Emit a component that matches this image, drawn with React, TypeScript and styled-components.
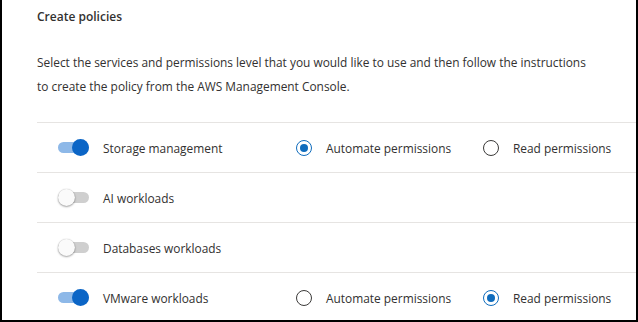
import styled, { createGlobalStyle } from 'styled-components';

const GlobalStyle = createGlobalStyle`
  html, body {
    margin: 0;
    padding: 0;
    background: #ffffff;
  }
  body {
    font-family: 'Open Sans', 'Noto Sans', sans-serif;
    color: #323130;
  }
`;

const Frame = styled.div`
  box-sizing: border-box;
  width: 638px;
  height: 322px;
  overflow: hidden;
  border: 2px solid #000;
  border-top: none;
  background: #fff;
  padding-left: 35px;
`;

const Title = styled.h2`
  margin: 0;
  padding-top: 7px;
  font-size: 12px;
  line-height: 20px;
  font-weight: 600;
  color: #323130;
`;

const Description = styled.p`
  margin: 23px 0 0;
  width: 562px;
  font-size: 11.9px;
  line-height: 24px;
  color: #323130;
`;

const ServiceList = styled.div`
  margin-top: 24px;
  border-top: 1px solid #e6e4e2;
`;

const Row = styled.div`
  display: grid;
  grid-template-columns: 45px 193px 187px 1fr;
  align-items: center;
  height: 49px;
  padding-left: 21px;
  border-bottom: 1px solid #e6e4e2;
  font-size: 11.9px;
`;

const Track = styled.span<{ $on: boolean }>`
  position: relative;
  display: block;
  width: 31px;
  height: 11px;
  border-radius: 6px;
  background: ${({ $on }) => ($on ? '#8db8e8' : '#cfcfcf')};
`;

const Thumb = styled.span<{ $on: boolean }>`
  position: absolute;
  top: -3px;
  left: ${({ $on }) => ($on ? '14px' : '0px')};
  width: 17px;
  height: 17px;
  border-radius: 50%;
  background: ${({ $on }) => ($on ? '#0b65c6' : '#fafafa')};
  box-shadow: ${({ $on }) =>
    $on ? 'none' : '0 1px 2px rgba(0, 0, 0, 0.35), 0 0 1px rgba(0, 0, 0, 0.25)'};
`;

const Label = styled.span`
  color: #323130;
`;

const Option = styled.label`
  display: flex;
  align-items: center;
  gap: 14px;
  color: #323130;
`;

const RadioCircle = styled.span<{ $checked: boolean }>`
  box-sizing: border-box;
  width: 16px;
  height: 16px;
  border-radius: 50%;
  border: 1.5px solid ${({ $checked }) => ($checked ? '#0f6cbd' : '#3b3a39')};
  display: flex;
  align-items: center;
  justify-content: center;

  &::after {
    content: '';
    display: ${({ $checked }) => ($checked ? 'block' : 'none')};
    width: 8px;
    height: 8px;
    border-radius: 50%;
    background: #0f6cbd;
  }
`;

function Toggle({ on }: { on: boolean }) {
  return (
    <Track $on={on}>
      <Thumb $on={on} />
    </Track>
  );
}

function Radio({ checked, children }: { checked: boolean; children: string }) {
  return (
    <Option>
      <RadioCircle $checked={checked} />
      {children}
    </Option>
  );
}

type Service = {
  name: string;
  enabled: boolean;
  mode?: 'automate' | 'read';
};

const services: Service[] = [
  { name: 'Storage management', enabled: true, mode: 'automate' },
  { name: 'AI workloads', enabled: false },
  { name: 'Databases workloads', enabled: false },
  { name: 'VMware workloads', enabled: true, mode: 'read' },
];

export default function App() {
  return (
    <>
      <GlobalStyle />
      <Frame>
        <Title>Create policies</Title>
        <Description>
          Select the services and permissions level that you would like to use and then follow the
          instructions to create the policy from the AWS Management Console.
        </Description>
        <ServiceList>
          {services.map((s) => (
            <Row key={s.name}>
              <Toggle on={s.enabled} />
              <Label>{s.name}</Label>
              {s.enabled && (
                <>
                  <Radio checked={s.mode === 'automate'}>Automate permissions</Radio>
                  <Radio checked={s.mode === 'read'}>Read permissions</Radio>
                </>
              )}
            </Row>
          ))}
        </ServiceList>
      </Frame>
    </>
  );
}
